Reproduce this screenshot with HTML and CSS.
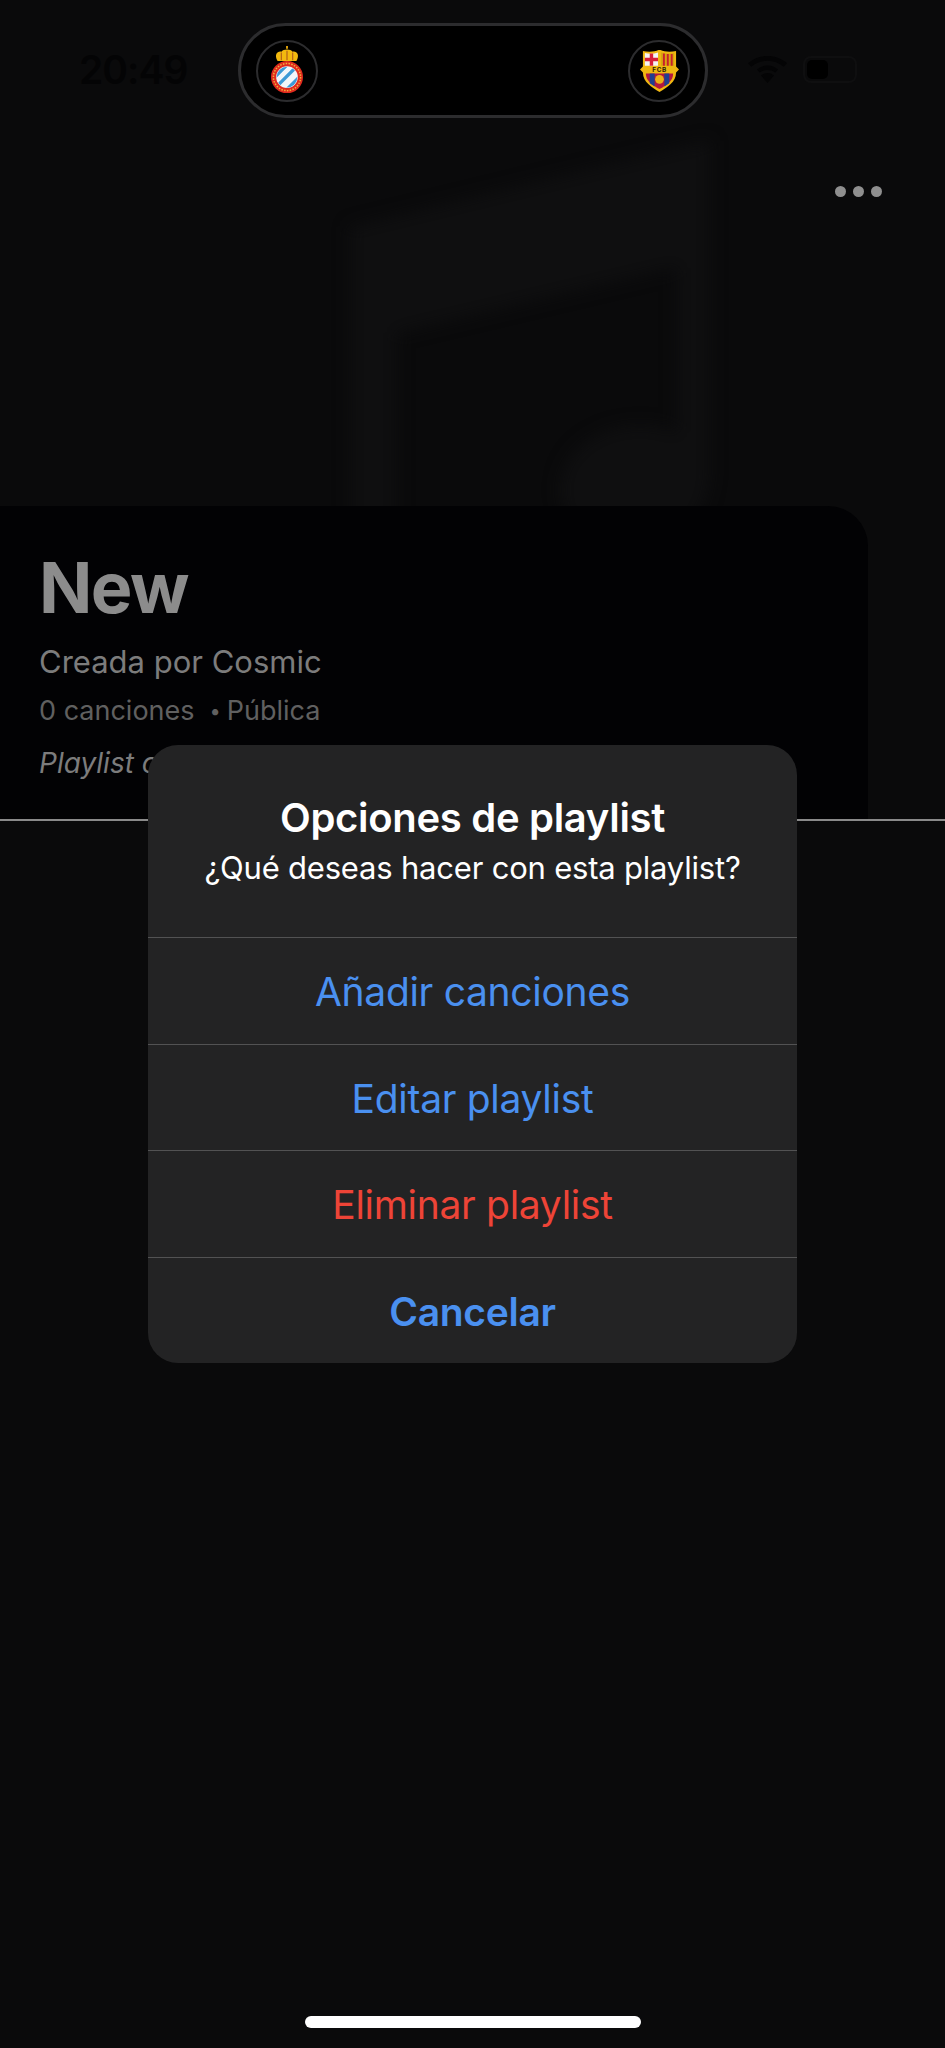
FILE: index.html
```html
<!DOCTYPE html>
<html lang="es">
<head>
<meta charset="utf-8">
<title>New</title>
<link rel="stylesheet" href="styles.css">
</head>
<body>
<main class="screen">
  <svg class="art" viewBox="0 0 945 820" aria-hidden="true">
    <path class="art-note" d="M350 227 L710 140 V470 C710 520 672 550 630 550 C590 550 560 525 560 490 C560 450 600 425 640 425 C655 425 668 428 677 434 V267 L397 333 V560 H350 Z"/>
  </svg>

  <header class="status">
    <span class="time">20:49</span>
    <div class="island">
      <span class="badge">
        <svg class="crest" viewBox="0 0 40 52" aria-label="RCD Espanyol">
          <path fill="#e8a80c" d="M19 0h2v3h-2z"/>
          <path fill="#f2b90f" d="M10 16 C6 9 10 5 14 6 C16 3 24 3 26 6 C30 5 34 9 30 16 Z"/>
          <path fill="#b5641a" d="M14 7v8M20 5v10M26 7v8" stroke="#b5641a" stroke-width="1.3"/>
          <circle cx="20" cy="33" r="17" fill="#e02a1e"/>
          <circle cx="20" cy="33" r="14.4" fill="none" stroke="#f0b13a" stroke-width="1.6" stroke-dasharray="1.6 1.4"/>
          <circle cx="20" cy="33" r="11.5" fill="#f2f6fa"/>
          <clipPath id="ball"><circle cx="20" cy="33" r="11"/></clipPath>
          <g clip-path="url(#ball)" stroke="#3d9ad6" stroke-width="3.6">
            <path d="M4 36 L22 18M10 42 L32 20M18 48 L38 28"/>
          </g>
        </svg>
      </span>
      <span class="badge">
        <svg class="crest crest-fcb" viewBox="0 0 40 44" aria-label="FC Barcelona">
          <path fill="#f0b711" d="M3 2 C8 3 15 3 19 1 L21 1 C25 3 32 3 37 2 C37 6 37 14 37 18 L40 21 L37 24 C37 34 28 39 20 44 C12 39 3 34 3 24 L0 21 L3 18 Z"/>
          <path fill="#f4f4f4" d="M5 4 C9 5 14 5 18.500 3.500 V17 H5 Z"/>
          <path fill="#d81f3a" d="M10 4.500h3.500V17H10z M5 9h13.500v3.500H5z"/>
          <path fill="#d8a510" d="M21.500 3.500 C25 5 30 5 35 4 V17 H21.500 Z"/>
          <path fill="#c8202c" d="M23.500 4.500h2V17h-2z M27.500 5h2v12h-2z M31.500 5h2v12h-2z"/>
          <text class="crest-text" x="20" y="23.500" text-anchor="middle">FCB</text>
          <path fill="#b3173f" d="M6 25 H34 C34 33 27 37 20 41 C13 37 6 33 6 25 Z"/>
          <path fill="#1f3f8f" d="M10 25h5v13.500l-5-3.500z M25 25h5v10l-5 3.500z"/>
          <circle cx="20" cy="31" r="4.500" fill="#eeb014"/>
        </svg>
      </span>
    </div>
    <div class="status-icons">
      <svg class="wifi" viewBox="0 0 39 27" aria-hidden="true">
        <path d="M19.500 27 13 19.500a10 10 0 0 1 13 0Z"/>
        <path d="M19.500 9.500A17 17 0 0 1 30 13.500l-2.700 3.100a13.500 13.500 0 0 0-15.600 0L9 13.500A17 17 0 0 1 19.500 9.500Z"/>
        <path d="M19.500 0C27 0 33.800 2.700 39 7.200l-3.300 3.600a24.800 24.800 0 0 0-32.400 0L0 7.200C5.200 2.700 12 0 19.500 0Z"/>
      </svg>
      <span class="battery"><span class="battery-level"></span></span>
    </div>
  </header>

  <div class="toolbar">
    <button class="more" aria-label="Más opciones"><i></i><i></i><i></i></button>
  </div>

  <section class="card">
    <h1 class="name">New</h1>
    <p class="author">Creada por Cosmic</p>
    <p class="meta"><span>0 canciones</span><span class="dot">•</span><span>Pública</span></p>
    <p class="desc">Playlist creada por Cosmic</p>
  </section>

  <div class="rule"></div>

  <div class="dialog" role="dialog">
    <div class="dialog-head">
      <h2 class="dialog-title">Opciones de playlist</h2>
      <p class="dialog-text">¿Qué deseas hacer con esta playlist?</p>
    </div>
    <button class="action">Añadir canciones</button>
    <button class="action">Editar playlist</button>
    <button class="action action-danger">Eliminar playlist</button>
    <button class="action action-strong">Cancelar</button>
  </div>

  <div class="home-bar"></div>
</main>
</body>
</html>
```

FILE: styles.css
```css
* { box-sizing: border-box; }
html, body { margin: 0; padding: 0; background: #0a0a0b; }
body { font-family: Inter, "Liberation Sans", sans-serif; }

.screen {
  position: relative;
  width: 945px;
  height: 2048px;
  overflow: hidden;
  background: #0a0a0b;
  display: flex;
  flex-direction: column;
}

.art { position: absolute; left: 0; top: 0; width: 945px; height: 820px; filter: blur(8px); }
.art-note { fill: #0f0f10; }

.status {
  position: relative;
  height: 142px;
  padding: 23px 88px 0 79px;
  display: flex;
  align-items: flex-start;
}
.time {
  width: 159px;
  margin-top: 24px;
  font-size: 39px;
  line-height: 46px;
  font-weight: 600;
  letter-spacing: -1px;
  color: #040405;
}
.island {
  width: 470px;
  height: 95px;
  background: #000;
  border: 3.500px solid #2c2c2e;
  border-radius: 48px;
  padding: 0 15px;
  display: flex;
  align-items: center;
  justify-content: space-between;
}
.badge {
  width: 62px;
  height: 62px;
  border: 2px solid #2c2c2e;
  border-radius: 50%;
  display: flex;
  align-items: center;
  justify-content: center;
}
.crest { width: 38px; height: 49px; }
.crest-fcb { width: 39px; height: 43px; }
.crest-text { font-size: 6.500px; font-weight: 700; fill: #2a1c08; letter-spacing: .6px; }

.status-icons {
  margin-left: 40px;
  margin-top: 33px;
  display: flex;
  align-items: center;
  gap: 16px;
}
.wifi { width: 39px; height: 27px; fill: #040405; display: block; }
.battery {
  width: 54px;
  height: 27px;
  border: 2px solid #0f0f10;
  border-radius: 8px;
  padding: 2px;
  display: block;
}
.battery-level { display: block; width: 21px; height: 100%; background: #000; border-radius: 5px; }

.toolbar {
  position: relative;
  height: 364px;
  padding: 44px 63px 0 0;
  display: flex;
  justify-content: flex-end;
  align-items: flex-start;
}
.more {
  padding: 0;
  border: 0;
  background: none;
  display: flex;
  gap: 7px;
}
.more i { display: block; width: 11px; height: 11px; border-radius: 50%; background: #8f8f8f; }

.card {
  position: relative;
  width: 868px;
  height: 313px;
  background: #020204;
  border-radius: 0 40px 0 0;
  padding: 44px 39px 0;
  overflow: hidden;
}
.name { margin: 0; font-size: 70px; line-height: 76px; font-weight: 700; letter-spacing: -1.500px; color: #8c8c8c; }
.author { margin: 17px 0 0; font-size: 31px; line-height: 38px; color: #7c7c7c; }
.meta { margin: 11px 0 0; font-size: 27px; line-height: 38px; color: #606060; display: flex; }
.dot { margin: 0 6px 0 15px; font-size: 20px; }
.desc { margin: 14px 0 0; font-size: 28px; line-height: 38px; font-style: italic; color: #7c7c7c; white-space: nowrap; }

.rule { position: relative; height: 2px; background: #8a8a8a; }

.dialog {
  position: absolute;
  left: 148px;
  top: 745px;
  width: 649px;
  height: 618px;
  background: #232324;
  border-radius: 30px;
  overflow: hidden;
  text-align: center;
  color: #fff;
}
.dialog-head { height: 192px; padding-top: 50px; }
.dialog-title { margin: 0; font-size: 40px; line-height: 46px; font-weight: 600; letter-spacing: -.3px; }
.dialog-text { margin: 8px 0 0; font-size: 31px; line-height: 38px; letter-spacing: -.2px; }

.action {
  display: block;
  width: 100%;
  height: 106.500px;
  padding: 2px 0 0;
  border: 0;
  border-top: 1.500px solid #525253;
  background: none;
  font: inherit;
  font-size: 39px;
  color: #4a90f0;
  letter-spacing: -.3px;
}
.action-danger { color: #ee4437; }
.action-strong { font-weight: 600; }

.home-bar {
  position: absolute;
  left: 305px;
  top: 2016px;
  width: 336px;
  height: 12px;
  border-radius: 6px;
  background: #fff;
}
```
